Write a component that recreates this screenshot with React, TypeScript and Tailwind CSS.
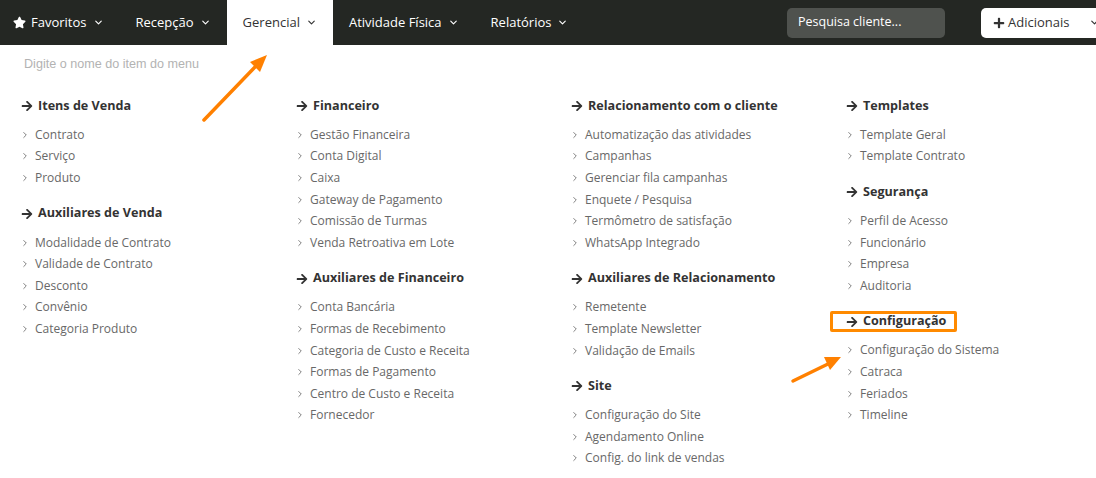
import React from 'react';
import { FaStar, FaArrowRight, FaPlus } from 'react-icons/fa';
import { ChevronDown, ChevronRight } from 'lucide-react';

type Section = { title: string; items: string[]; highlight?: boolean };

const COLUMNS: Section[][] = [
  [
    { title: 'Itens de Venda', items: ['Contrato', 'Serviço', 'Produto'] },
    {
      title: 'Auxiliares de Venda',
      items: ['Modalidade de Contrato', 'Validade de Contrato', 'Desconto', 'Convênio', 'Categoria Produto'],
    },
  ],
  [
    {
      title: 'Financeiro',
      items: [
        'Gestão Financeira',
        'Conta Digital',
        'Caixa',
        'Gateway de Pagamento',
        'Comissão de Turmas',
        'Venda Retroativa em Lote',
      ],
    },
    {
      title: 'Auxiliares de Financeiro',
      items: [
        'Conta Bancária',
        'Formas de Recebimento',
        'Categoria de Custo e Receita',
        'Formas de Pagamento',
        'Centro de Custo e Receita',
        'Fornecedor',
      ],
    },
  ],
  [
    {
      title: 'Relacionamento com o cliente',
      items: [
        'Automatização das atividades',
        'Campanhas',
        'Gerenciar fila campanhas',
        'Enquete / Pesquisa',
        'Termômetro de satisfação',
        'WhatsApp Integrado',
      ],
    },
    { title: 'Auxiliares de Relacionamento', items: ['Remetente', 'Template Newsletter', 'Validação de Emails'] },
    { title: 'Site', items: ['Configuração do Site', 'Agendamento Online', 'Config. do link de vendas'] },
  ],
  [
    { title: 'Templates', items: ['Template Geral', 'Template Contrato'] },
    { title: 'Segurança', items: ['Perfil de Acesso', 'Funcionário', 'Empresa', 'Auditoria'] },
    {
      title: 'Configuração',
      items: ['Configuração do Sistema', 'Catraca', 'Feriados', 'Timeline'],
      highlight: true,
    },
  ],
];

const NAV = [
  { label: 'Favoritos', star: true },
  { label: 'Recepção' },
  { label: 'Gerencial', active: true },
  { label: 'Atividade Física' },
  { label: 'Relatórios' },
];

function NavItem({ label, star, active }: { label: string; star?: boolean; active?: boolean }) {
  return (
    <div
      className={
        active
          ? 'flex items-center h-full px-[16px] bg-white text-[#333]'
          : 'flex items-center h-full px-[16px] text-white'
      }
    >
      {star && <FaStar size={13} className="mr-[5px] -ml-[3px]" />}
      <span>{label}</span>
      <ChevronDown size={11} strokeWidth={2.5} className="ml-[6px]" />
    </div>
  );
}

function MenuSection({ section }: { section: Section }) {
  return (
    <div className="mb-[15px]">
      <div className="relative w-fit h-5 mb-2 flex items-center text-[12.6px] font-bold text-[#333]">
        {section.highlight && (
          <span className="absolute -left-[16px] -right-[11px] -top-[1px] bottom-0 border-[3px] border-[#ff8a00] rounded-[2px]" />
        )}
        <FaArrowRight size={12} className="mr-[5px]" />
        <span>{section.title}</span>
      </div>
      {section.items.map((item) => (
        <div key={item} className="h-[21.6px] flex items-center text-[12px] text-[#686868]">
          <ChevronRight size={10} strokeWidth={2} className="-ml-[1px] mr-[5px] text-[#666]" />
          <span>{item}</span>
        </div>
      ))}
    </div>
  );
}

export default function App() {
  return (
    <div className="relative w-[1096px] h-[478px] overflow-hidden bg-white" style={{ fontFamily: '"Open Sans", sans-serif' }}>
      <nav className="h-[45px] bg-[#242723] flex items-center text-[13px]">
        {NAV.map((n) => (
          <NavItem key={n.label} {...n} />
        ))}
        <div className="ml-auto mr-[-20px] flex items-center gap-[36px]">
          <div className="w-[158px] h-[30px] rounded-[5px] bg-[#4f524e] flex items-center px-[11px] text-[12.5px] text-white">
            Pesquisa cliente...
          </div>
          <div className="w-[135px] h-[30px] rounded-[5px] bg-white flex items-center pl-[12px] text-[13px] text-[#333]">
            <FaPlus size={12} className="mr-[3px]" />
            <span>Adicionais</span>
            <ChevronDown size={11} strokeWidth={2.5} className="ml-[20px]" />
          </div>
        </div>
      </nav>

      <div className="h-[38px] flex items-center pl-[24px] text-[12.6px] text-[#b3b3b3]" style={{ fontFamily: '"Liberation Sans", Arial, sans-serif' }}>
        Digite o nome do item do menu
      </div>

      <div className="grid grid-cols-[275px_275px_275px_275px] pl-[21px] pt-[13px]">
        {COLUMNS.map((col, i) => (
          <div key={i}>
            {col.map((s) => (
              <MenuSection key={s.title} section={s} />
            ))}
          </div>
        ))}
      </div>

      <svg className="absolute inset-0 pointer-events-none" width="1096" height="478">
        <line x1="204" y1="120" x2="256" y2="66" stroke="#ff8000" strokeWidth="3.5" strokeLinecap="round" />
        <polygon points="267,55 250,62 260,72" fill="#ff8000" />
        <line x1="793" y1="381" x2="830" y2="363" stroke="#ff8000" strokeWidth="3.5" strokeLinecap="round" />
        <polygon points="841,357 824,357 830,370" fill="#ff8000" />
      </svg>
    </div>
  );
}
